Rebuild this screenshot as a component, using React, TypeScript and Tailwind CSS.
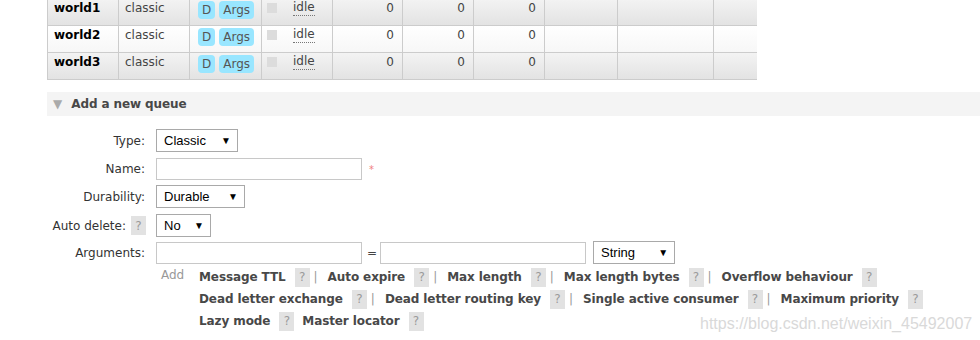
import React from 'react';

const font = "font-['DejaVu_Sans',Verdana,sans-serif]";

const rows = [
  { name: 'world1', odd: true },
  { name: 'world2', odd: false },
  { name: 'world3', odd: true },
];

const Help = () => (
  <span className="inline-flex h-[19px] w-[15px] items-center justify-center bg-[#e2e2e2] text-[12px] text-[#9a9a9a]">?</span>
);

const Select = ({ label, w }: { label: string; w: string }) => (
  <div className={`${w} flex h-[23px] items-center justify-between border border-[#a9a9a9] bg-white pl-[7px] pr-[6px] font-['Liberation_Sans',Arial,sans-serif] text-[13px] text-black`}>
    <span>{label}</span>
    <span className="text-[10px]">▼</span>
  </div>
);

const Input = ({ w }: { w: string }) => (
  <div className={`${w} h-[22px] border border-[#c8c8c8] bg-white`} />
);

const Sep = () => <span className="ml-[4px] mr-[10px] text-[#999]">|</span>;

const Opt = ({ t, sep = true, last = false }: { t: string; sep?: boolean; last?: boolean }) => (
  <span className="inline-flex items-center">
    <span className="font-bold tracking-[-0.1px] text-[#484848]">{t}</span>
    <span className="ml-[9px]"><Help /></span>
    {!last && (sep ? <Sep /> : <span className="w-[8px]" />)}
  </span>
);

export default function App() {
  return (
    <div className={`relative h-[340px] w-[980px] overflow-hidden bg-white ${font} text-[12px] text-[#444]`}>
      {/* queue table */}
      <div className="-mt-px ml-[47px] w-[710px] border-l border-[#ccc]">
        {rows.map((r) => (
          <div
            key={r.name}
            className={`flex h-[27px] border-b border-[#ccc] leading-[16px] ${
              r.odd ? 'bg-gradient-to-b from-[#f3f3f3] to-[#e3e3e3]' : 'bg-gradient-to-b from-[#ffffff] to-[#f7f7f7]'
            }`}
          >
            <div className="w-[71px] border-r border-[#ccc] pl-[6px] pt-[1px] font-bold text-black">{r.name}</div>
            <div className="w-[71px] border-r border-[#ccc] pl-[6px] pt-[1px]">classic</div>
            <div className="flex w-[72px] items-start gap-[4px] border-r border-[#ccc] pl-[8px] pt-[2px]">
              <span className="flex h-[18px] items-center rounded-[4px] bg-[#99e6ff] px-[4px] text-[#555]">D</span>
              <span className="flex h-[18px] items-center rounded-[4px] bg-[#99e6ff] px-[4px] text-[#555]">Args</span>
            </div>
            <div className="flex w-[71px] items-start border-r border-[#ccc] pl-[5px] pt-[4px]">
              <span className="h-[10px] w-[10px] bg-[#dcdcdc]" />
              <span className="-mt-[3px] ml-[16px] border-b border-dotted border-[#777] leading-[15px] text-[#444]">idle</span>
            </div>
            <div className="w-[70px] border-r border-[#ccc] pr-[8px] pt-[1px] text-right">0</div>
            <div className="w-[71px] border-r border-[#ccc] pr-[8px] pt-[1px] text-right">0</div>
            <div className="w-[71px] border-r border-[#ccc] pr-[8px] pt-[1px] text-right">0</div>
            <div className="w-[73px] border-r border-[#ccc]" />
            <div className="w-[96px] border-r border-[#ccc]" />
            <div className="flex-1" />
          </div>
        ))}
      </div>

      {/* section header */}
      <div className="ml-[47px] mt-[12px] flex h-[24px] items-center bg-[#f4f4f4] pl-[6px]">
        <span className="text-[12px] text-[#aaa]">▼</span>
        <span className="ml-[9px] text-[12px] font-bold tracking-[-0.1px] text-[#484848]">Add a new queue</span>
      </div>

      {/* form */}
      <div className="mt-[13px] flex flex-col text-[#333]">
        <div className="flex h-[23px] items-center">
          <div className="w-[145px] text-right">Type:</div>
          <div className="ml-[11px]"><Select label="Classic" w="w-[82px]" /></div>
        </div>
        <div className="mt-[6px] flex h-[22px] items-center">
          <div className="w-[145px] text-right">Name:</div>
          <div className="ml-[11px]"><Input w="w-[206px]" /></div>
          <span className="ml-[7px] text-[10px] text-[#f08080]">*</span>
        </div>
        <div className="mt-[5px] flex h-[23px] items-center">
          <div className="w-[145px] text-right">Durability:</div>
          <div className="ml-[11px]"><Select label="Durable" w="w-[89px]" /></div>
        </div>
        <div className="mt-[6px] flex h-[23px] items-center">
          <div className="flex w-[146px] items-center justify-end gap-[5px]">
            <span>Auto delete:</span>
            <Help />
          </div>
          <div className="ml-[10px]"><Select label="No" w="w-[55px]" /></div>
        </div>
        <div className="mt-[4px] flex h-[23px] items-center">
          <div className="w-[145px] text-right">Arguments:</div>
          <div className="ml-[11px]"><Input w="w-[206px]" /></div>
          <span className="ml-[5px] mr-[3px] text-[#444]">=</span>
          <Input w="w-[206px]" />
          <div className="ml-[7px]"><Select label="String" w="w-[82px]" /></div>
        </div>

        <div className="mt-[2px] flex">
          <div className="ml-[161px] w-[38px] pt-[1px] leading-[16px] text-[#999]">Add</div>
          <div className="flex flex-col text-[12px]">
            <div className="flex h-[22px] items-center">
              <Opt t="Message TTL" />
              <Opt t="Auto expire" />
              <Opt t="Max length" />
              <Opt t="Max length bytes" />
              <Opt t="Overflow behaviour" last />
            </div>
            <div className="flex h-[22px] items-center">
              <Opt t="Dead letter exchange" />
              <Opt t="Dead letter routing key" />
              <Opt t="Single active consumer" />
              <Opt t="Maximum priority" last />
            </div>
            <div className="flex h-[22px] items-center">
              <Opt t="Lazy mode" sep={false} />
              <Opt t="Master locator" last />
            </div>
          </div>
        </div>
      </div>

      {/* watermark */}
      <div className="absolute left-[700px] top-[312px] font-['Liberation_Sans',Arial,sans-serif] text-[16px] text-[#d9d9d9]">
        https://blog.csdn.net/weixin_45492007
      </div>
    </div>
  );
}
